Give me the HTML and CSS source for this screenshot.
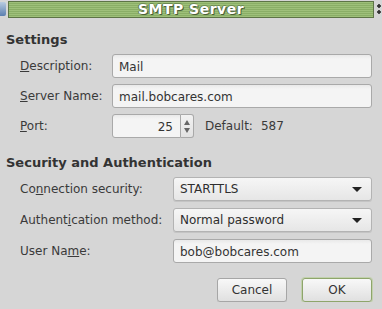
FILE: index.html
```html
<!DOCTYPE html>
<html lang="en">

<head>
  <meta charset="UTF-8">
  <title>SMTP Server</title>
  <link rel="stylesheet" href="styles.css">
</head>

<body>
  <div class="titlebar">
    <span class="win-icon"></span>
    <div class="title">SMTP Server</div>
    <span class="win-menu"></span>
  </div>

  <div class="dialog">
    <h2>Settings</h2>
    <div class="form settings">
      <label><u>D</u>escription:</label>
      <div class="field">Mail</div>

      <label><u>S</u>erver Name:</label>
      <div class="field">mail.bobcares.com</div>

      <label><u>P</u>ort:</label>
      <div class="port-row">
        <div class="spin">
          <div class="field num">25</div>
          <div class="arrows">
            <span class="up"></span>
            <span class="down"></span>
          </div>
        </div>
        <span class="default">Default:</span>
        <span class="default">587</span>
      </div>
    </div>

    <h2 class="second">Security and Authentication</h2>
    <div class="form security">
      <label>Co<u>n</u>nection security:</label>
      <div class="select">STARTTLS<span class="caret"></span></div>

      <label>Authent<u>i</u>cation method:</label>
      <div class="select">Normal password<span class="caret"></span></div>

      <label>User Na<u>m</u>e:</label>
      <div class="field">bob@bobcares.com</div>
    </div>

    <div class="buttons">
      <button>Cancel</button>
      <button class="ok">OK</button>
    </div>
  </div>
</body>

</html>
```

FILE: styles.css
```css
html {
  background: #d6d6d6;
}

body {
  margin: 0;
  font-family: "DejaVu Sans", sans-serif;
  font-size: 12px;
  color: #3a3a3a;
}

.titlebar {
  display: flex;
  align-items: center;
  height: 17px;
  gap: 2px;
}

.win-icon {
  width: 6px;
  height: 14px;
  background: linear-gradient(#b9cbe0, #5b7fb0);
  border-radius: 0 2px 2px 0;
}

.win-menu {
  width: 6px;
  height: 12px;
  background: radial-gradient(circle at 3px 3px, #333 1.5px, transparent 2px),
              radial-gradient(circle at 3px 9px, #333 1.5px, transparent 2px);
}

.title {
  flex: 1;
  height: 15px;
  margin-top: 1px;
  border: 1px solid #5d7446;
  background: repeating-linear-gradient(#9ec07a 0, #9ec07a 1px, #8aae66 1px, #8aae66 2px);
  color: #fff;
  font-weight: bold;
  font-size: 14px;
  line-height: 15px;
  text-align: center;
  text-shadow: 1px 1px 0 #4a5e38, -1px 0 0 #5e7a46, 0 -1px 0 #6c8a52;
  letter-spacing: 0.5px;
}

.dialog {
  padding: 0 10px 0 6px;
}

h2 {
  margin: 15px 0 6px;
  font-size: 13px;
  font-weight: bold;
  line-height: 16px;
  color: #333;
}

h2.second {
  margin-top: 17px;
  margin-bottom: 6px;
}

.form {
  display: grid;
  align-items: center;
  row-gap: 6px;
  padding-left: 14px;
}

.settings {
  grid-template-columns: 92px 1fr;
}

.security {
  grid-template-columns: 153px 1fr;
  row-gap: 7px;
}

label {
  line-height: 14px;
}

.field {
  height: 24px;
  line-height: 24px;
  padding: 0 6px;
  border: 1px solid #a9a9a9;
  border-radius: 3px;
  background: linear-gradient(#e9e9e9, #f4f4f4 4px, #f4f4f4);
  box-sizing: border-box;
  color: #333;
}

.port-row {
  display: flex;
  align-items: center;
}

.spin {
  display: flex;
  width: 82px;
  height: 24px;
}

.spin .num {
  flex: 1;
  text-align: right;
  border-radius: 3px 0 0 3px;
  padding-right: 7px;
}

.arrows {
  width: 12px;
  border: 1px solid #a9a9a9;
  border-left: 0;
  border-radius: 0 3px 3px 0;
  background: linear-gradient(#f2f2f2, #e2e2e2);
  display: flex;
  flex-direction: column;
  align-items: center;
  justify-content: space-around;
  padding: 3px 0;
}

.arrows span {
  width: 0;
  height: 0;
  border-left: 3px solid transparent;
  border-right: 3px solid transparent;
}

.arrows .up {
  border-bottom: 5px solid #666;
}

.arrows .down {
  border-top: 5px solid #666;
}

.default {
  margin-left: 11px;
}

.default + .default {
  margin-left: 8px;
}

.select {
  position: relative;
  height: 24px;
  line-height: 22px;
  padding: 0 6px;
  border: 1px solid #b3b3b3;
  border-radius: 3px;
  box-sizing: border-box;
  background: linear-gradient(#f6f6f6, #e6e6e6);
  box-shadow: 0 1px 0 #c4c4c4;
  color: #2e2e2e;
}

.caret {
  position: absolute;
  right: 9px;
  top: 9px;
  border-left: 5px solid transparent;
  border-right: 5px solid transparent;
  border-top: 5px solid #222;
}

.buttons {
  display: flex;
  justify-content: flex-end;
  gap: 15px;
  margin-top: 15px;
}

button {
  width: 70px;
  height: 24px;
  font: inherit;
  color: #333;
  border: 1px solid #a6a6a6;
  border-radius: 3px;
  background: linear-gradient(#f8f8f8, #e0e0e0);
  box-shadow: 0 1px 0 #c4c4c4;
}

button.ok {
  border-color: #8ea56b;
  box-shadow: 0 0 0 1px #c2d1ad;
}
```
